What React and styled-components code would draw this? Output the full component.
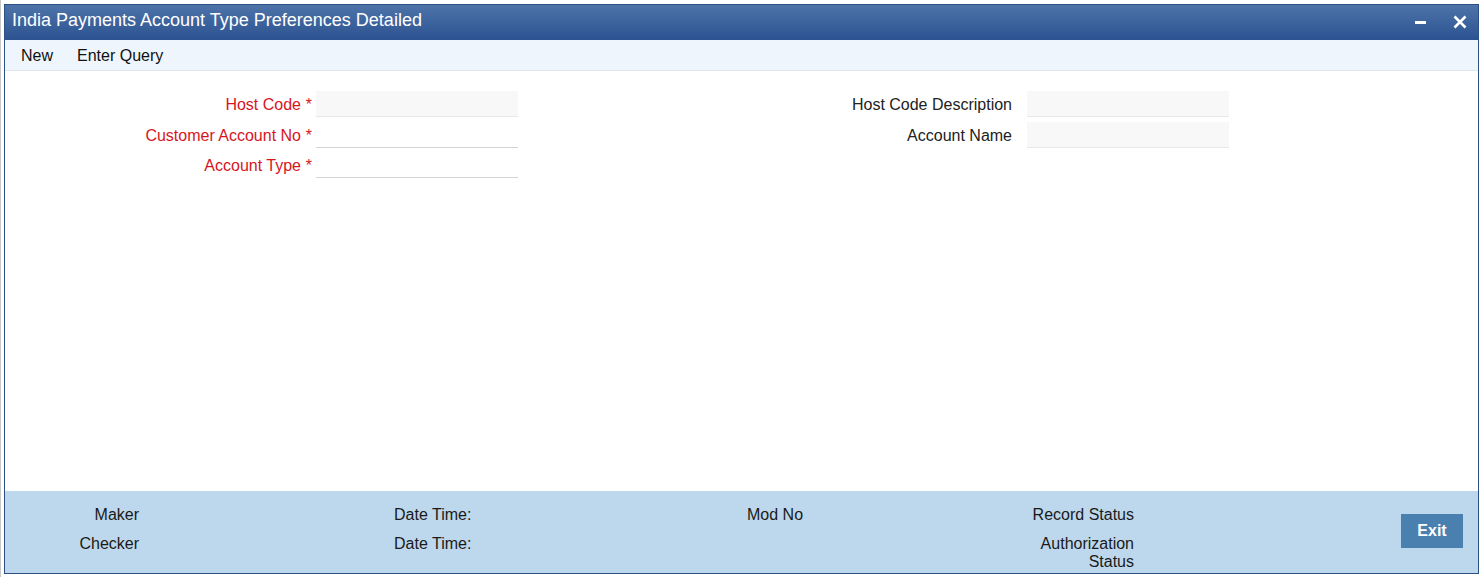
import React from "react";
import styled, { createGlobalStyle } from "styled-components";

const GlobalStyle = createGlobalStyle`
	html, body {
		margin: 0;
		padding: 0;
		background: #fff;
		font-family: "Liberation Sans", Arial, sans-serif;
	}
`;

const Page = styled.div`
	padding: 4px 0 0 3px;
	border-left: 1px solid #c8c8c8;
	width: 1481px;
	height: 577px;
	box-sizing: border-box;
`;

const Window = styled.div`
	width: 1475px;
	height: 570px;
	box-sizing: border-box;
	border: 1px solid #2c4f84;
	display: flex;
	flex-direction: column;
	background: #fff;
`;

const TitleBar = styled.div`
	height: 35px;
	box-sizing: border-box;
	display: flex;
	align-items: center;
	justify-content: space-between;
	padding: 0 11px 4px 7px;
	background: linear-gradient(#4d73a9, #2c5391);
	color: #fff;
	font-size: 18px;
`;

const WindowButtons = styled.div`
	display: flex;
	align-items: center;
	gap: 26px;
	padding-top: 3px;
`;

const IconButton = styled.button`
	background: none;
	border: none;
	padding: 0;
	display: flex;
	cursor: pointer;
`;

const Toolbar = styled.div`
	height: 31px;
	display: flex;
	align-items: center;
	gap: 24px;
	padding: 2px 0 0 16px;
	box-sizing: border-box;
	background: #eef5fd;
	border-bottom: 1px solid #dfe5ec;
	font-size: 16px;
	color: #111;
`;

const ToolItem = styled.span`
	cursor: pointer;
`;

const Main = styled.div`
	flex: 1;
	padding-top: 20px;
`;

const Form = styled.div`
	display: grid;
	grid-template-columns: 307px 202px 501px 202px;
	grid-auto-rows: 26px;
	column-gap: 4px;
	row-gap: 4.5px;
`;

const Label = styled.label`
	display: flex;
	align-items: center;
	justify-content: flex-end;
	padding-top: 2px;
	font-size: 16px;
	color: ${(p) => (p.$required ? "#d7141e" : "#222")};
`;

const Star = styled.span`
	display: inline-block;
	width: 11px;
	text-align: right;
	visibility: ${(p) => (p.$hidden ? "hidden" : "visible")};
`;

const Field = styled.input`
	box-sizing: border-box;
	height: 26px;
	border: none;
	border-bottom: 1px solid ${(p) => (p.$readOnly ? "#e8e8e8" : "#d4d4d4")};
	background: ${(p) => (p.$readOnly ? "#f8f8f8" : "#fff")};
	font: inherit;
	outline: none;
`;

const Footer = styled.div`
	height: 82px;
	box-sizing: border-box;
	background: #bdd8ec;
	padding: 15px 15px 0 0;
	display: grid;
	grid-template-columns: 134px 255px 353px 277px 110px 1fr;
	grid-auto-rows: 18px;
	row-gap: 11px;
	font-size: 16px;
	line-height: 18px;
	color: #1a1a1a;
`;

const FootLabel = styled.span`
	text-align: ${(p) => (p.$right ? "right" : "left")};
	grid-column: ${(p) => p.$col};
	grid-row: ${(p) => p.$row};
`;

const ExitButton = styled.button`
	grid-column: 6;
	grid-row: 1 / span 2;
	justify-self: end;
	align-self: start;
	margin-top: 8px;
	width: 62px;
	height: 34px;
	border: none;
	background: #4a80b0;
	color: #fff;
	font: bold 16px "Liberation Sans", Arial, sans-serif;
	cursor: pointer;
`;

const Minimize = () => (
	<svg width="12" height="12" viewBox="0 0 12 12">
		<rect x="0" y="5" width="11" height="3" fill="#fff" />
	</svg>
);

const Close = () => (
	<svg width="14" height="14" viewBox="0 0 14 14">
		<path d="M1.5 1.5 L12.5 12.5 M12.5 1.5 L1.5 12.5" stroke="#fff" strokeWidth="2.6" />
	</svg>
);

const App = () => {
	return (
		<>
			<GlobalStyle />
			<Page>
				<Window>
					<TitleBar>
						<span>India Payments Account Type Preferences Detailed</span>
						<WindowButtons>
							<IconButton><Minimize /></IconButton>
							<IconButton><Close /></IconButton>
						</WindowButtons>
					</TitleBar>
					<Toolbar>
						<ToolItem>New</ToolItem>
						<ToolItem>Enter Query</ToolItem>
					</Toolbar>
					<Main>
						<Form>
							<Label $required>Host Code<Star>*</Star></Label>
							<Field $readOnly readOnly />
							<Label>Host Code Description<Star $hidden>*</Star></Label>
							<Field $readOnly readOnly />

							<Label $required>Customer Account No<Star>*</Star></Label>
							<Field />
							<Label>Account Name<Star $hidden>*</Star></Label>
							<Field $readOnly readOnly />

							<Label $required>Account Type<Star>*</Star></Label>
							<Field />
						</Form>
					</Main>
					<Footer>
						<FootLabel $right $col={1} $row={1}>Maker</FootLabel>
						<FootLabel $col={3} $row={1}>Date Time:</FootLabel>
						<FootLabel $col={4} $row={1}>Mod No</FootLabel>
						<FootLabel $right $col={5} $row={1}>Record Status</FootLabel>
						<FootLabel $right $col={1} $row={2}>Checker</FootLabel>
						<FootLabel $col={3} $row={2}>Date Time:</FootLabel>
						<FootLabel $right $col={5} $row={2}>Authorization Status</FootLabel>
						<ExitButton>Exit</ExitButton>
					</Footer>
				</Window>
			</Page>
		</>
	);
};

export default App;
